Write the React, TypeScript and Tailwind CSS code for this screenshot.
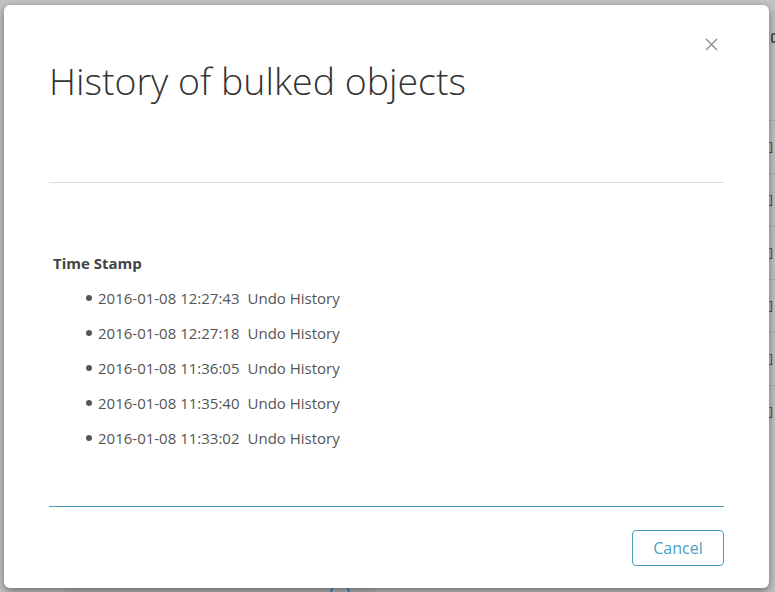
import React from "react";

const items = [
  "2016-01-08 12:27:43",
  "2016-01-08 12:27:18",
  "2016-01-08 11:36:05",
  "2016-01-08 11:35:40",
  "2016-01-08 11:33:02",
];

export default function App() {
  return (
    <div
      className="relative w-[775px] h-[592px] overflow-hidden bg-[#c3c3c3]"
      style={{ fontFamily: '"Open Sans", "Liberation Sans", sans-serif' }}
    >
      {/* page content behind overlay (right strip) */}
      <div className="absolute left-[769px] top-0 w-[10px] h-[592px] flex flex-col">
        <div className="h-[33px]" />
        <div className="h-[10px] w-[6px] ml-[2px] border-2 border-[#555] rounded-[2px]" />
        <div className="h-[77px]" />
        {[0, 1, 2, 3, 4, 5].map((i) => (
          <div key={i} className="h-[53px] border-t border-[#b3b3b3] flex items-center">
            <span className="text-[12px] text-[#444] leading-none">]</span>
          </div>
        ))}
      </div>
      <div className="absolute left-[65px] top-[588px] w-[310px] h-[4px] bg-[#b8b8b8]" />
      <div className="absolute left-[330px] top-[583px] w-[20px] h-[20px] rounded-full border-2 border-[#4a8fc4]" />

      {/* modal */}
      <div className="absolute left-[4px] top-[5px] w-[765px] h-[583px] bg-white rounded-[6px] shadow-[0_3px_9px_rgba(0,0,0,0.45)] px-[45px] flex flex-col">
        <button className="absolute right-[50px] top-[31px] w-[16px] h-[16px] flex items-center justify-center text-[#888]">
          <svg width="13" height="13" viewBox="0 0 13 13" fill="none" stroke="#8a8a8a" strokeWidth="1.3">
            <path d="M1 1 L12 12 M12 1 L1 12" />
          </svg>
        </button>
        <h1 className="mt-[55px] text-[37.5px] leading-[42px] font-light text-[#333]">
          History of bulked objects
        </h1>
        <div className="mt-[80px] h-px bg-[#dddddd]" />
        <div className="mt-[69px] ml-[4px] text-[15px] leading-[22px] font-bold text-[#444]">
          Time Stamp
        </div>
        <ul className="mt-[13px] ml-[37px] flex flex-col gap-[13px]">
          {items.map((t) => (
            <li key={t} className="flex items-center text-[15px] leading-[22px] text-[#555]">
              <span className="w-[6px] h-[6px] rounded-full bg-[#555] mr-[6px]" />
              <span>{t}</span>
              <span className="ml-[8px]">Undo History</span>
            </li>
          ))}
        </ul>
        <div className="mt-[57px] h-px bg-[#4a9fbf]" />
        <div className="mt-[23px] flex justify-end">
          <button className="w-[92px] h-[36px] rounded-[4px] border border-[#4a9fc4] text-[#4a9fc4] text-[16px] bg-white">
            Cancel
          </button>
        </div>
      </div>
    </div>
  );
}
